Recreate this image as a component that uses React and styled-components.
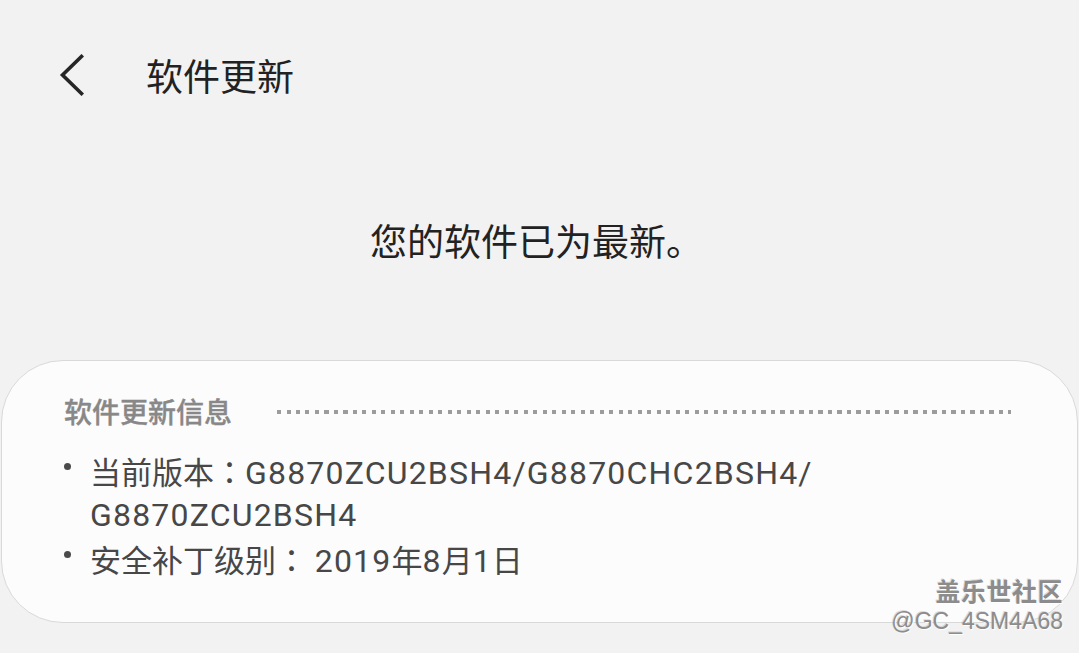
import React from "react";
import styled, { createGlobalStyle } from "styled-components";

const Global = createGlobalStyle`
  html, body { margin: 0; padding: 0; background: #f2f2f2; }
  body { font-family: Roboto, "Noto Sans CJK SC", sans-serif; }
`;

const Page = styled.div`
  position: relative;
  width: 1079px;
  height: 653px;
  overflow: hidden;
  background: #f2f2f2;
  display: flex;
  flex-direction: column;
`;

const Header = styled.header`
  height: 150px;
  display: flex;
  align-items: center;
  padding-left: 56px;
  box-sizing: border-box;
`;

const BackButton = styled.button`
  width: 30px;
  height: 44px;
  padding: 0;
  border: 0;
  background: none;
  display: flex;
  align-items: center;
  justify-content: center;
  color: #222;
`;

const Title = styled.h1`
  margin: 0 0 0 60px;
  font-family: "Noto Sans CJK SC", sans-serif;
  font-weight: 400;
  font-size: 37px;
  line-height: 50px;
  color: #222;
`;

const Message = styled.div`
  height: 210px;
  box-sizing: border-box;
  padding: 65px 6px 0 0;
  text-align: center;
  font-family: "Noto Sans CJK SC", sans-serif;
  font-size: 37px;
  line-height: 50px;
  color: #222;
`;

const Card = styled.section`
  margin: 0 1px;
  height: 263px;
  box-sizing: border-box;
  background: #fcfcfc;
  border: 1px solid #d9d9d9;
  border-radius: 62px;
  padding: 32px 66px 0 62px;
`;

const CardTitleRow = styled.div`
  display: flex;
  align-items: center;
  height: 36px;
  gap: 45px;
`;

const CardTitle = styled.h2`
  margin: 0;
  font-family: "Noto Sans CJK SC", sans-serif;
  font-weight: 500;
  font-size: 28px;
  line-height: 36px;
  color: #888888;
  -webkit-text-stroke: 0.35px #888888;
  white-space: nowrap;
`;

const DotLine = styled.div`
  flex: 1;
  height: 4px;
  margin-top: 1px;
  background-image: repeating-linear-gradient(
    to right,
    #9c9c9c 0 4px,
    transparent 4px 9.5px
  );
`;

const List = styled.ul`
  list-style: none;
  margin: 24px 0 0;
  padding: 0;
  display: flex;
  flex-direction: column;
  gap: 4px;
`;

const Item = styled.li`
  display: grid;
  grid-template-columns: 26px 1fr;
  font-family: Roboto, "Noto Sans CJK SC", sans-serif;
  font-size: 31px;
  line-height: 42px;
  color: #474747;
`;

const Bullet = styled.span`
  width: 7px;
  height: 7px;
  border-radius: 50%;
  background: #4a4a4a;
  margin: 10px 0 0 0;
`;

const ItemText = styled.span`
  display: block;
  width: 760px;
`;

const Code = styled.span`
  font-size: 32px;
  line-height: 1;
  letter-spacing: 1.2px;
`;

const Colon = styled.span`
  font-family: "Noto Sans CJK TC", sans-serif;
  line-height: 1;
`;

const Watermark = styled.div`
  position: absolute;
  right: 16px;
  bottom: 20px;
  display: flex;
  flex-direction: column;
  align-items: flex-end;
  color: #8c8c8c;
  text-shadow: 1px 1px 0 rgba(255, 255, 255, 0.95), -1px -1px 0 rgba(120, 120, 120, 0.25);
`;

const MarkName = styled.div`
  font-family: "Noto Sans CJK SC", sans-serif;
  font-weight: 700;
  font-size: 25px;
  line-height: 34px;
  letter-spacing: 0.5px;
`;

const MarkId = styled.div`
  font-family: "Liberation Sans", sans-serif;
  font-size: 23px;
  line-height: 28px;
  margin-bottom: -2px;
`;

export default function App() {
  return (
    <Page>
      <Global />
      <Header>
        <BackButton aria-label="返回">
          <svg width="26" height="42" viewBox="0 0 26 42">
            <path d="M23.5 2.5 L4.5 21 L23.5 39.5" fill="none" stroke="#262626" strokeWidth="3.6" strokeLinecap="square" strokeLinejoin="miter" />
          </svg>
        </BackButton>
        <Title>软件更新</Title>
      </Header>
      <Message>您的软件已为最新。</Message>
      <Card>
        <CardTitleRow>
          <CardTitle>软件更新信息</CardTitle>
          <DotLine />
        </CardTitleRow>
        <List>
          <Item>
            <Bullet />
            <ItemText>
              当前版本<Colon>：</Colon><Code>G8870ZCU2BSH4/G8870CHC2BSH4/ G8870ZCU2BSH4</Code>
            </ItemText>
          </Item>
          <Item>
            <Bullet />
            <ItemText>
              安全补丁级别<Colon>：</Colon> <Code>2019</Code>年<Code>8</Code>月<Code>1</Code>日
            </ItemText>
          </Item>
        </List>
      </Card>
      <Watermark>
        <MarkName>盖乐世社区</MarkName>
        <MarkId>@GC_4SM4A68</MarkId>
      </Watermark>
    </Page>
  );
}
